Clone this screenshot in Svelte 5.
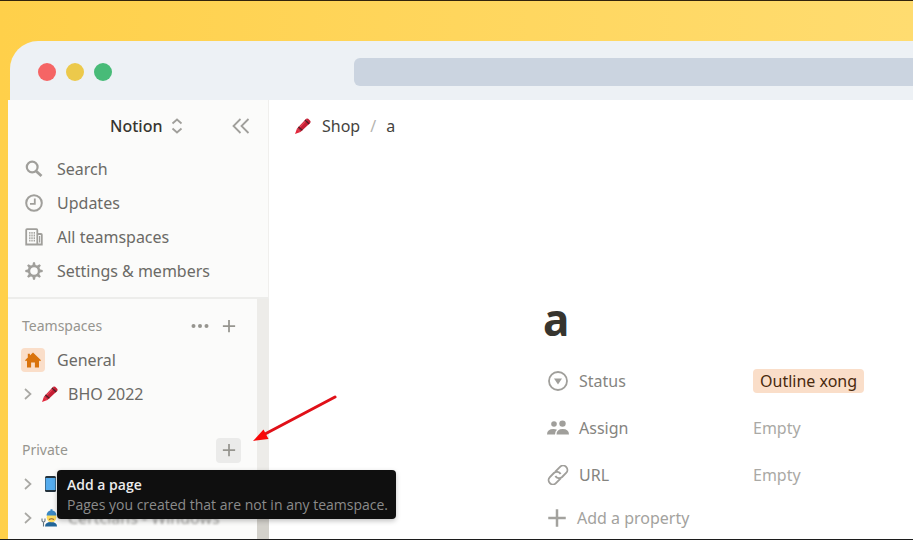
<script lang="ts">
  const nav = [
    { label: 'Search', icon: 'search' },
    { label: 'Updates', icon: 'clock' },
    { label: 'All teamspaces', icon: 'building' },
    { label: 'Settings & members', icon: 'gear' }
  ];

  const properties = [
    { name: 'Status', icon: 'status', value: 'Outline xong' },
    { name: 'Assign', icon: 'people', value: null },
    { name: 'URL', icon: 'link', value: null }
  ];

  const gearTeeth = [0, 45, 90, 135, 180, 225, 270, 315];
</script>

{#snippet crayon()}
  <svg class="crayon" viewBox="0 0 18 18" width="18" height="18" aria-hidden="true">
    <path d="M1 17 3 11.5 6.5 15Z" fill="#e2283c" />
    <path d="M3 11.5 12.2 1.8Q13.2 1 14.2 1.8L16.4 4Q17 5 16.2 6L6.5 15Z" fill="#c41e34" />
    <path d="M4.6 11.4 13 2.6" stroke="#e8485a" stroke-width="1.2" />
    <path d="m4.4 10 4 3.3M11 3l4.2 4" stroke="#4b2026" stroke-width="1.3" />
  </svg>
{/snippet}

{#snippet plus(size: number)}
  <svg viewBox="0 0 16 16" width={size} height={size} aria-hidden="true">
    <path d="M8 1v14M1 8h14" stroke="currentColor" stroke-width="2" fill="none" />
  </svg>
{/snippet}

{#snippet chevron()}
  <svg class="chevron" viewBox="0 0 8 12" width="8" height="12" aria-hidden="true">
    <path d="m1 1 5.5 5L1 11" fill="none" stroke="#a9a8a4" stroke-width="1.7" />
  </svg>
{/snippet}

<div class="page">
  <div class="titlebar">
    <span class="dot red"></span>
    <span class="dot yellow"></span>
    <span class="dot green"></span>
    <div class="address"></div>
  </div>

  <div class="window">
    <aside>
      <div class="workspace">
        <button class="switcher">
          Notion
          <svg viewBox="0 0 12 16" width="12" height="16" aria-hidden="true">
            <path d="M1.5 5.5 6 1.5l4.5 4M1.5 10.5 6 14.500l4.500-4" fill="none" stroke="#a09f9b" stroke-width="1.8" />
          </svg>
        </button>
        <button class="collapse" aria-label="Close sidebar">
          <svg viewBox="0 0 18 16" width="18" height="16" aria-hidden="true">
            <path d="M8.5 1 1.5 8l7 7M16.5 1l-7 7 7 7" fill="none" stroke="#a09f9b" stroke-width="1.8" />
          </svg>
        </button>
      </div>

      <nav>
        {#each nav as item}
          <a href="#{item.icon}">
            <svg viewBox="0 0 18 18" width="18" height="18" fill="none" stroke="currentColor" aria-hidden="true">
              {#if item.icon === 'search'}
                <circle cx="7.2" cy="7" r="5.400" stroke-width="2.200" />
                <path d="m11 11 5.500 5" stroke-width="2.800" />
              {:else if item.icon === 'clock'}
                <circle cx="9" cy="9" r="7.800" stroke-width="2" />
                <path d="M9.800 4.500v5.300H5" stroke-width="1.800" />
              {:else if item.icon === 'building'}
                <path d="M1.200 16.500V2q0-.8.8-.8h9.500q.8 0 .8.8v14.500ZM12.300 6h3.700q.8 0 .8.800v9.700h-4.500" stroke-width="1.800" />
                <path d="M4.800 4v10M7 4v10M9.300 4v10" stroke-width="1.300" stroke-dasharray="1.800 .8" />
                <path d="M14.600 8v6.500" stroke-width="1.200" />
              {:else}
                <circle cx="9" cy="9" r="5" stroke-width="2.400" />
                {#each gearTeeth as angle}
                  <path d="M7.300 3.800 8 .3h2l.7 3.500Z" fill="currentColor" stroke="none" transform="rotate({angle} 9 9)" />
                {/each}
              {/if}
            </svg>
            {item.label}
          </a>
        {/each}
      </nav>

      <div class="scroller">
        <div class="sections">
          <section>
            <div class="section-head">
              <h2>Teamspaces</h2>
              <button aria-label="More">
                <svg viewBox="0 0 18 4" width="18" height="4" fill="currentColor" aria-hidden="true">
                  <circle cx="2.500" cy="2" r="2" /><circle cx="9" cy="2" r="2" /><circle cx="15.500" cy="2" r="2" />
                </svg>
              </button>
              <button aria-label="Add a teamspace page">{@render plus(14)}</button>
            </div>
            <a class="row home" href="#general">
              <span class="home-icon">
                <svg viewBox="0 0 16 16" width="16" height="16" fill="#d9730d" aria-hidden="true">
                  <path d="M8 .5 16 8.200l-1 1L14 8.400V15.500H9.900V10.500H6.100v5H2V8.400l-1 .8-1-1 2.800-2.800V1.800h2.100v1.700Z" />
                </svg>
              </span>
              General
            </a>
            <a class="row" href="#bho">
              {@render chevron()}
              {@render crayon()}
              BHO 2022
            </a>
          </section>

          <section>
            <div class="section-head">
              <h2>Private</h2>
              <button class="active" aria-describedby="add-tip" aria-label="Add">{@render plus(14)}</button>
              <div class="tooltip" id="add-tip" role="tooltip">
                <strong>Add a page</strong>
                <span>Pages you created that are not in any teamspace.</span>
              </div>
              <svg class="pointer" viewBox="0 0 84 48" width="84" height="48" aria-hidden="true">
                <path d="M82 2 12 39" stroke="#e01018" stroke-width="3" stroke-linecap="round" />
                <path d="M0 46 10.500 34.500 15.500 44Z" fill="#f80808" />
              </svg>
            </div>
            <a class="row" href="#phone" aria-label="Phone">
              {@render chevron()}
              <svg viewBox="0 0 18 18" width="18" height="18" aria-hidden="true">
                <rect x="4" y="1" width="11" height="16" rx="1.500" fill="#24323c" />
                <rect x="4.500" y="3" width="10" height="12" fill="#55acee" />
              </svg>
            </a>
            <a class="row" href="#windows">
              {@render chevron()}
              <svg viewBox="0 0 18 18" width="18" height="18" aria-hidden="true">
                <path d="M4 17.500q0-4.500 6-4.500t6 4.500Z" fill="#226699" />
                <circle cx="10.500" cy="8.500" r="4.800" fill="#ffdc5d" />
                <path d="M5.500 6.500Q6 2 9.500 1.500V.3h2v1.200Q15 2 15.500 6.500Z" fill="#3b88c3" />
                <path d="M8 10.500q2.500-1.500 5 0" stroke="#8a5a30" stroke-width="1.200" fill="none" />
                <path d="M1 9.500v2q0 1.500 1.500 1.500T4 11.500v-2M2.500 13v4.500" fill="none" stroke="#66757f" stroke-width="1.100" />
              </svg>
              <span class="faded">Certcians - Windows</span>
            </a>
          </section>
        </div>
        <div class="scrollbar"><div class="thumb"></div></div>
      </div>
    </aside>

    <main>
      <div class="breadcrumb">
        {@render crayon()}
        <a href="#shop">Shop</a>
        <span class="slash">/</span>
        <a href="#a">a</a>
      </div>

      <article>
        <h1>a</h1>
        <dl>
          {#each properties as prop}
            <div class="property">
              <dt>
                <svg viewBox="0 0 22 20" width="22" height="20" fill="none" stroke="currentColor" aria-hidden="true">
                  {#if prop.icon === 'status'}
                    <circle cx="11" cy="10" r="9" stroke-width="1.800" />
                    <path d="M7 7.500h8L11 13.500Z" fill="currentColor" stroke="none" />
                  {:else if prop.icon === 'people'}
                    <g fill="currentColor" stroke="none">
                      <circle cx="7" cy="6" r="2.800" />
                      <circle cx="15.500" cy="5.600" r="3.200" />
                      <path d="M0 16.500q0-5.500 6.500-5.500 2 0 3.500.7-2 1.500-2 4.800ZM9.500 16.500q0-5.500 6.200-5.500t6.300 5.500Z" />
                    </g>
                  {:else}
                    <g transform="rotate(-45 11 10)" stroke-width="1.900">
                      <path d="M10.500 14.300H3.800a4.300 4.300 0 0 1 0-8.600h5.700a4.300 4.300 0 0 1 4 5.500" />
                      <path d="M11.500 5.700h6.700a4.300 4.300 0 0 1 0 8.600h-5.700a4.300 4.300 0 0 1-4-5.500" />
                    </g>
                  {/if}
                </svg>
                {prop.name}
              </dt>
              <dd>
                {#if prop.value}
                  <span class="pill">{prop.value}</span>
                {:else}
                  Empty
                {/if}
              </dd>
            </div>
          {/each}
        </dl>
        <button class="add">{@render plus(20)} Add a property</button>
      </article>
    </main>
  </div>
</div>

<style>
  :global(body) {
    margin: 0;
  }

  .page {
    box-sizing: border-box;
    min-height: 100vh;
    display: flex;
    flex-direction: column;
    padding: 40px 0 0 8px;
    border-top: 1px solid #33240c;
    border-bottom: 1px solid #1c1c1c;
    background: linear-gradient(90deg, #ffd04a, #ffdc70);
    font-family: 'Noto Sans', 'Open Sans', sans-serif;
    font-size: 16px;
    line-height: 24px;
    color: #6b6a66;
  }

  a {
    color: inherit;
    text-decoration: none;
  }

  button {
    display: flex;
    align-items: center;
    justify-content: center;
    padding: 0;
    border: 0;
    background: none;
    color: #96958f;
    font: inherit;
  }

  svg {
    flex: none;
  }

  .titlebar {
    box-sizing: border-box;
    display: flex;
    align-items: center;
    gap: 10px;
    height: 59px;
    margin-left: 2px;
    padding: 2px 0 0 28px;
    border-top-left-radius: 28px;
    background: #edf1f5;
  }

  .dot {
    width: 18px;
    height: 18px;
    border-radius: 50%;
  }

  .red {
    background: #f56565;
  }

  .yellow {
    background: #ecc94b;
  }

  .green {
    background: #48bb78;
  }

  .address {
    flex: 1;
    height: 28px;
    margin-left: 232px;
    border-radius: 6px 0 0 6px;
    background: #cbd4e0;
  }

  .window {
    flex: 1;
    display: flex;
    background: #fff;
  }

  aside {
    display: flex;
    flex-direction: column;
    flex: none;
    width: 261px;
    background: #fbfbfa;
  }

  .workspace,
  nav {
    border-right: 1px solid #f0efed;
  }

  .workspace {
    display: flex;
    align-items: center;
    justify-content: space-between;
    height: 52px;
    padding: 0 18px 0 102px;
  }

  .switcher {
    gap: 9px;
    color: #37352f;
    font-weight: 500;
  }

  nav {
    padding-bottom: 9px;
    border-bottom: 2px solid #ededeb;
  }

  nav a {
    display: flex;
    align-items: center;
    gap: 14px;
    height: 34px;
    padding-left: 17px;
  }

  nav svg {
    color: #a09f9b;
  }

  .scroller {
    flex: 1;
    display: flex;
  }

  .sections {
    flex: 1;
    display: flex;
    flex-direction: column;
    gap: 22px;
    padding-top: 10px;
  }

  .scrollbar {
    display: flex;
    align-items: flex-end;
    width: 12px;
    background: #edece9;
  }

  .thumb {
    width: 12px;
    height: 40px;
    background: #d3d1cb;
  }

  .section-head {
    position: relative;
    display: flex;
    align-items: center;
    gap: 4px;
    height: 34px;
    padding: 0 16px 0 14px;
  }

  .section-head h2 {
    flex: 1;
    margin: 0;
    color: #96958f;
    font-size: 14px;
    font-weight: 400;
  }

  .section-head button {
    width: 25px;
    height: 25px;
    border-radius: 4px;
  }

  .section-head .active {
    background: #ebebea;
  }

  .tooltip {
    position: absolute;
    z-index: 1;
    top: 37px;
    left: 49px;
    display: flex;
    flex-direction: column;
    padding: 5px 8px 4px 10px;
    border-radius: 4px;
    background: #0f0f0f;
    box-shadow: 0 2px 5px rgba(15, 15, 15, 0.25);
    color: #8b8b8b;
    font-family: 'Open Sans', 'Noto Sans', sans-serif;
    font-size: 14px;
    font-weight: 500;
    line-height: 20px;
    white-space: nowrap;
  }

  .tooltip strong {
    color: #ececec;
    font-weight: 600;
  }

  .pointer {
    position: absolute;
    top: -38px;
    left: 245px;
  }

  .row {
    display: flex;
    align-items: center;
    gap: 9px;
    height: 34px;
    padding-left: 16px;
  }

  .home {
    gap: 12px;
    padding-left: 13px;
  }

  .home-icon {
    display: flex;
    align-items: center;
    justify-content: center;
    width: 24px;
    height: 24px;
    border-radius: 4px;
    background: #fadec9;
  }

  .faded {
    filter: blur(1px);
    opacity: 0.6;
  }

  main {
    flex: 1;
    min-width: 0;
  }

  .breadcrumb {
    display: flex;
    align-items: center;
    gap: 10px;
    height: 52px;
    padding-left: 25px;
    color: #45433e;
  }

  .slash {
    color: #b5b4b0;
  }

  article {
    padding: 137px 20px 0 274px;
  }

  h1 {
    margin: 0;
    color: #37352f;
    font-size: 44px;
    font-weight: 700;
    line-height: 60px;
  }

  dl {
    margin: 8px 0 0;
  }

  .property {
    display: flex;
    align-items: center;
    height: 47px;
  }

  dt,
  .add {
    display: flex;
    align-items: center;
    gap: 10px;
    padding-left: 4px;
    color: #85847f;
  }

  dt {
    box-sizing: border-box;
    width: 210px;
  }

  dt svg {
    color: #a09f9b;
  }

  dd {
    margin: 0;
    color: #aaa9a5;
  }

  .pill {
    display: block;
    padding: 0 7px;
    border-radius: 4px;
    background: #fadec9;
    color: #49290e;
  }

  .add {
    height: 40px;
    color: #a3a29e;
  }
</style>
